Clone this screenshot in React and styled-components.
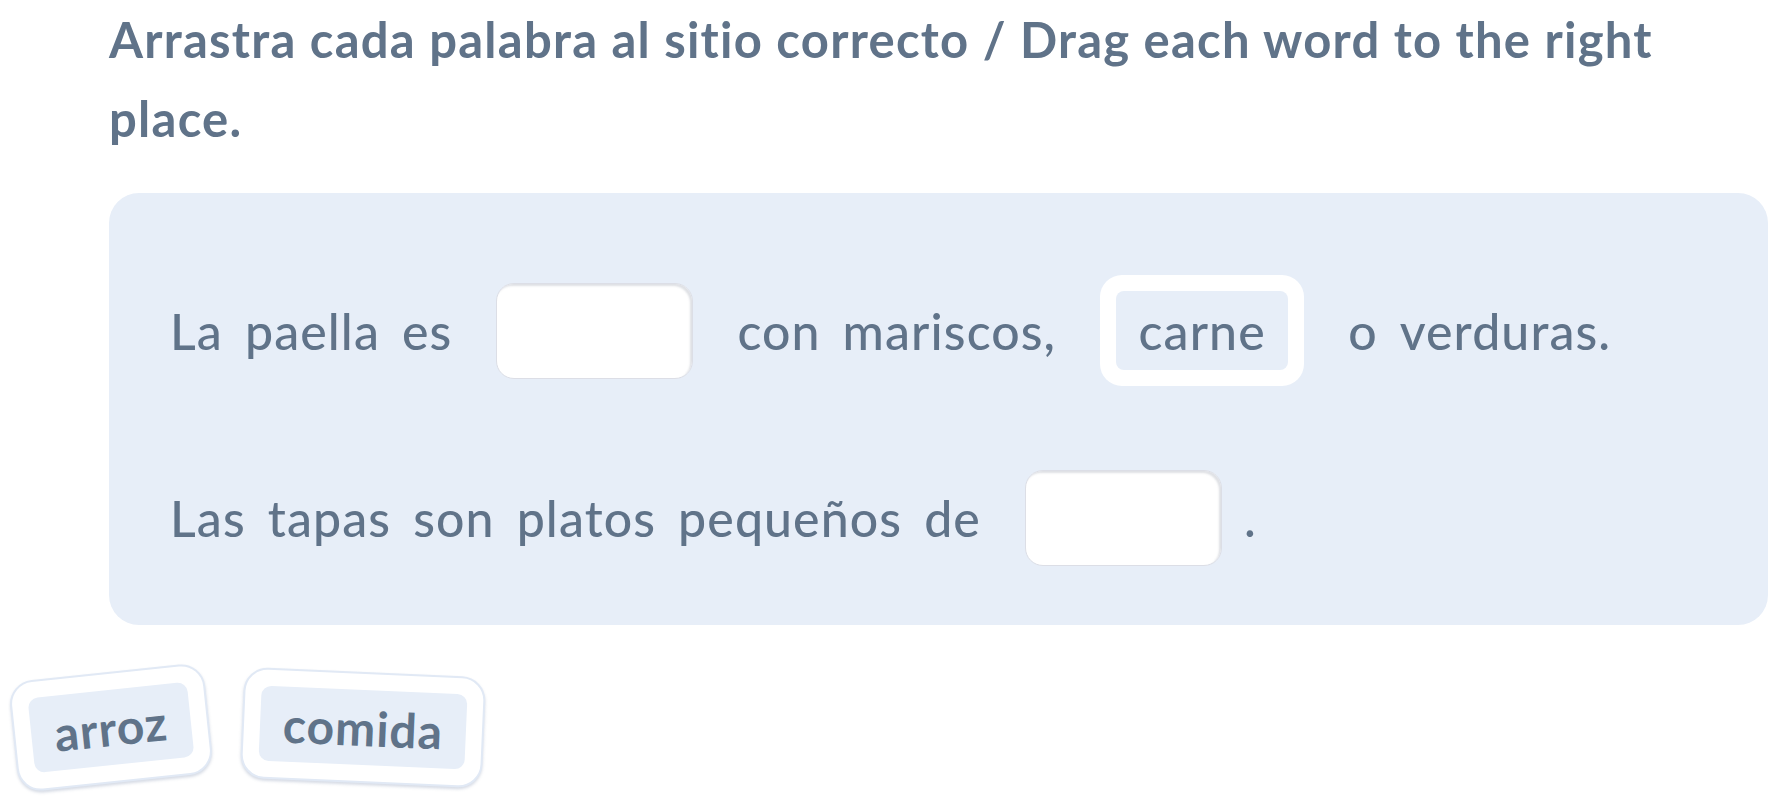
import styled, { createGlobalStyle } from "styled-components";

const GlobalStyle = createGlobalStyle`
  body {
    margin: 8px;
    background: #ffffff;
    font-family: "Lato", "Noto Sans", sans-serif;
    color: #607389;
  }
`;

const sentences = [
  ["La", "paella", "es", { blank: true }, "con", "mariscos,", { filled: "carne" }, "o", "verduras."],
  ["Las", "tapas", "son", "platos", "pequeños", "de", { blank: true }, "."],
];

const bank = [
  { word: "arroz", tilt: -6 },
  { word: "comida", tilt: 2.5 },
];

const App = () => {
  return (
    <>
      <GlobalStyle />
      <Page>
        <Title>Arrastra cada palabra al sitio correcto / Drag each word to the right place.</Title>
        <Panel>
          {sentences.map((parts, i) => (
            <Sentence key={i}>
              {parts.map((p, j) => {
                if (typeof p === "string")
                  return (
                    <Word key={j} $punct={p === "."}>
                      {p}
                    </Word>
                  );
                if (p.blank) return <Blank key={j} />;
                return (
                  <Placed key={j}>
                    <PlacedInner>{p.filled}</PlacedInner>
                  </Placed>
                );
              })}
            </Sentence>
          ))}
        </Panel>
        <Bank>
          {bank.map((b) => (
            <Chip key={b.word} $tilt={b.tilt}>
              <ChipInner>{b.word}</ChipInner>
            </Chip>
          ))}
        </Bank>
      </Page>
    </>
  );
};

export default App;

const Page = styled.div`
  display: flex;
  flex-direction: column;
  padding-bottom: 40px;
`;

const Title = styled.h1`
  max-width: 1580px;
  margin: -8px 0 0 101px;
  font-size: 49px;
  font-weight: 700;
  letter-spacing: 1.25px;
  line-height: 79px;
`;

const Panel = styled.div`
  margin: 35px 3px 0 101px;
  background: #e7eef8;
  border-radius: 30px;
  padding: 82px 60px 52px 61px;
  display: flex;
  flex-direction: column;
  gap: 76px;
`;

const Sentence = styled.div`
  display: flex;
  flex-wrap: wrap;
  align-items: center;
  column-gap: 22px;
  min-height: 111px;
`;

const Word = styled.span`
  font-size: 50px;
  font-weight: 500;
  letter-spacing: 1.1px;
  line-height: 1;
  margin-left: ${(p) => (p.$punct ? "-22px" : "0")};
`;

const Blank = styled.div`
  width: 197px;
  height: 96px;
  box-sizing: border-box;
  margin: 0 22px;
  background: #ffffff;
  border-radius: 18px;
  border: 1px solid #dcdee6;
  box-shadow: inset -2px 2px 2px rgba(150, 155, 170, 0.3);
`;

const Placed = styled.div`
  margin: 0 22px;
  padding: 16px;
  background: #ffffff;
  border-radius: 22px;
`;

const PlacedInner = styled.div`
  width: 172px;
  height: 79px;
  display: flex;
  align-items: center;
  justify-content: center;
  background: #e7eef8;
  border-radius: 8px;
  font-size: 50px;
  font-weight: 500;
  letter-spacing: 1.1px;
`;

const Bank = styled.div`
  display: flex;
  gap: 33px;
  margin-top: 47px;
  padding-left: 5px;
`;

const Chip = styled.div`
  padding: 16px;
  background: #ffffff;
  border: 2px solid #e1e9f5;
  border-radius: 24px;
  box-shadow: 0 2px 3px rgba(120, 135, 170, 0.3);
  transform: rotate(${(p) => p.$tilt}deg);
`;

const ChipInner = styled.div`
  height: 75px;
  padding: 0 23px;
  display: flex;
  align-items: center;
  background: #e7eef8;
  border-radius: 10px;
  font-size: 48px;
  font-weight: 700;
  letter-spacing: 1px;
`;
